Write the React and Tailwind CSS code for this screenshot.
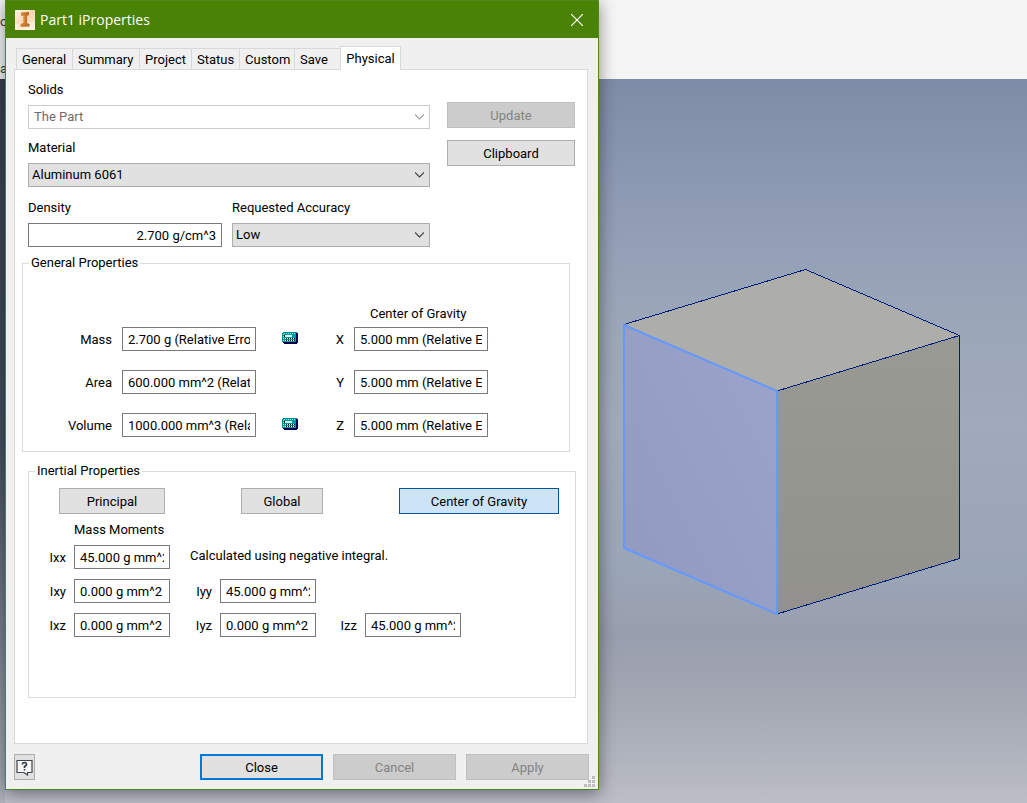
import React from 'react';

const Field = ({ label, value, id, align = 'text-left' }) => (
  <input
    id={id}
    aria-label={label}
    defaultValue={value}
    className={`h-6 w-full min-w-0 rounded-none border border-[#7a7a7a] bg-white px-[5px] text-black outline-none ${align}`}
  />
);

const Combo = ({ id, options, disabled }) => (
  <div className="relative">
    <select
      id={id}
      disabled={disabled}
      className={`h-6 w-full appearance-none rounded-none border pr-6 outline-none ${disabled ? 'border-[#cccccc] bg-white pl-[5px] text-[#6d6d6d] opacity-100' : 'border-[#adadad] bg-[#e1e1e1] pl-[3px] text-black'}`}
    >
      {options.map((o) => <option key={o}>{o}</option>)}
    </select>
    <svg viewBox="0 0 9 6" className={`pointer-events-none absolute top-[9px] right-[6px] h-[6px] w-[9px] ${disabled ? 'text-[#a0a0a0]' : 'text-[#404040]'}`}>
      <path d="M0 .5L4.500 5L9 .5" fill="none" stroke="currentColor" strokeWidth="1.1" />
    </svg>
  </div>
);

const VARIANTS = {
  normal: 'border border-[#adadad] bg-[#e1e1e1] text-black',
  disabled: 'border border-[#bfbfbf] bg-[#cccccc] text-[#838383]',
  active: 'border border-[#005499] bg-[#cce4f7] text-black',
  focus: 'border-2 border-[#0078d7] bg-[#e1e1e1] text-black',
};

const Button = ({ children, variant = 'normal', className = '' }) => (
  <button type="button" disabled={variant === 'disabled'} className={`h-[26px] pt-[2px] ${VARIANTS[variant]} ${className}`}>
    {children}
  </button>
);

const InventorIcon = () => (
  <svg viewBox="0 0 20 20" className="h-5 w-5" aria-hidden="true">
    <defs>
      <linearGradient id="paper" x1="0" y1="0" x2="1" y2="1">
        <stop offset="0" stopColor="#fff4e8" />
        <stop offset=".5" stopColor="#f7d5b5" />
        <stop offset="1" stopColor="#fdebdc" />
      </linearGradient>
      <linearGradient id="beam" x1="0" y1="0" x2="1" y2="0">
        <stop offset="0" stopColor="#d98a3a" />
        <stop offset="1" stopColor="#b5651d" />
      </linearGradient>
    </defs>
    <path d="M0 0H20V20H0Z" fill="url(#paper)" />
    <path d="M0 14L20 12V20H0Z" fill="#fff3e6" opacity=".7" />
    <path d="M6 2.500L14 2V5L12 6V13L14.500 14V16.500L5.500 17V14L8 13V6L6 5.500Z" fill="url(#beam)" />
    <path d="M8 6L9.500 5.500V13.500L8 13Z" fill="#e8a456" />
  </svg>
);

const CalcIcon = () => (
  <svg viewBox="0 0 16 12" className="h-3 w-4" shapeRendering="crispEdges" aria-hidden="true">
    <path d="M1 0H15V1H16V11H15V12H2V11H1V10H0V1H1Z" fill="#000050" />
    <path d="M1 1H14V10H1Z" fill="#009a9a" />
    <path d="M1 0H15V1H1ZM0 1H1V10H0Z" fill="#008a8a" />
    <path d="M2 1h1v1h-1zM4 1h1v1h-1zM6 1h1v1h-1zM8 1h1v1h-1zM10 1h1v1h-1zM12 1h1v1h-1zM1 2h1v1h-1zM1 4h1v1h-1zM1 6h1v1h-1zM1 8h1v1h-1z" fill="#6ff" />
    <path d="M2 3H10V5H2Z" fill="#000" />
    <path d="M3 3H10V5H3Z" fill="#e8e8e8" />
    <path d="M3 6H13V7H3ZM3 8H13V9H3Z" fill="#000" />
    <path d="M3 6h1v1h-1zM5 6h1v1h-1zM7 6h1v1h-1zM9 6h1v1h-1zM11 6h1v1h-1zM3 8h1v1h-1zM5 8h1v1h-1zM7 8h1v1h-1zM9 8h1v1h-1zM11 8h1v1h-1z" fill="#fff" />
  </svg>
);

const HelpIcon = () => (
  <svg viewBox="0 0 17 17" className="h-[17px] w-[17px]" aria-hidden="true">
    <path d="M1 1.500H16V13.500H11.500V16L8 13.500H1Z" fill="#f7f7f7" stroke="#3c4650" strokeWidth="1.200" />
    <path d="M6.500 5.500V4.500Q6.500 3.500 8.500 3.500T10.500 5.500Q10.500 6.500 8.500 7.500V9M8.500 10V11.500" fill="none" stroke="#2c3640" strokeWidth="1.600" />
  </svg>
);

const Cube = () => (
  <svg viewBox="622 267 340 349" className="h-[349px] w-[340px] shrink-0" role="img" aria-label="Part1 model">
    <defs>
      <linearGradient id="left" x1="1" y1="0" x2="0" y2="1">
        <stop offset="0" stopColor="#9ba4ca" />
        <stop offset="1" stopColor="#9199c1" />
      </linearGradient>
      <linearGradient id="right" x1="0" y1="0" x2="0" y2="1">
        <stop offset="0" stopColor="#999a93" />
        <stop offset="1" stopColor="#92918d" />
      </linearGradient>
    </defs>
    <path d="M624 325L806 269L960 336L777 391Z" fill="#adada9" />
    <path d="M777 391L960 336V558L777 614Z" fill="url(#right)" />
    <path d="M624 325L777 391V614L624 548Z" fill="url(#left)" />
    <path d="M624 324.500L805.500 269.500L959.500 335.500V558.500L777 614M777 391L959.500 335.500" fill="none" stroke="#001c80" shapeRendering="crispEdges" />
    <path d="M624 325L777 391V614L624 548Z" fill="none" stroke="#6699ff" strokeWidth="2" />
  </svg>
);

const Grip = () => (
  <svg viewBox="0 0 11 11" className="absolute right-[3px] bottom-[2px] h-[11px] w-[11px]" aria-hidden="true">
    <path d="M8 0h3v3h-3zM4 4h3v3h-3zM8 4h3v3h-3zM0 8h3v3h-3zM4 8h3v3h-3zM8 8h3v3h-3z" fill="#bfbfbf" />
  </svg>
);

const TABS = ['General', 'Summary', 'Project', 'Status', 'Custom', 'Save'];

const PROPERTIES = [
  { name: 'Mass', value: '2.700 g (Relative Error = 0.000000%)', calc: true, axis: 'X' },
  { name: 'Area', value: '600.000 mm^2 (Relative Error = 0.000000%)', calc: false, axis: 'Y' },
  { name: 'Volume', value: '1000.000 mm^3 (Relative Error = 0.000000%)', calc: true, axis: 'Z' },
];

const Moment = ({ name, value }) => (
  <>
    <label htmlFor={name} className="pt-[5px] text-right">{name}</label>
    <Field id={name} value={value} />
  </>
);

const GeneralProperties = () => (
  <fieldset className="mt-2 mr-[17px] ml-[7px] border border-[#dcdcdc] pb-[14px]">
    <legend className="ml-[6px] px-[2px]">General Properties</legend>
    <div className="grid grid-cols-[89px_134px_78px_134px] gap-x-[10px] pt-[35px] pb-[5px]">
      <span className="col-start-4 pl-4">Center of Gravity</span>
    </div>
    <div className="grid grid-cols-[89px_134px_78px_134px] gap-x-[10px] gap-y-[19px]">
      {PROPERTIES.map((p) => (
        <React.Fragment key={p.name}>
          <label htmlFor={p.name} className="pt-[5px] text-right">{p.name}</label>
          <Field id={p.name} value={p.value} />
          <div className="flex items-start justify-between pt-[5px] pl-4">
            {p.calc ? <button type="button" aria-label={`Calculate ${p.name}`}><CalcIcon /></button> : <span />}
            <label htmlFor={p.axis}>{p.axis}</label>
          </div>
          <Field id={p.axis} value="5.000 mm (Relative Error = 0.000000%)" />
        </React.Fragment>
      ))}
    </div>
  </fieldset>
);

const InertialProperties = () => (
  <fieldset className="mt-[11px] mr-[11px] ml-[13px] border border-[#dcdcdc] pb-[60px]">
    <legend className="ml-[6px] px-[2px]">Inertial Properties</legend>
    <div className="flex justify-between pt-[9px] pr-4 pb-2 pl-[30px]">
      <Button className="w-[106px]">Principal</Button>
      <Button className="w-[82px]">Global</Button>
      <Button className="w-[160px]" variant="active">Center of Gravity</Button>
    </div>
    <p className="pb-[7px] pl-[45px]">Mass Moments</p>
    <div className="grid grid-cols-[37px_96px_34px_96px_33px_96px] gap-x-2 gap-y-[10px]">
      <Moment name="Ixx" value="45.000 g mm^2" />
      <p className="col-span-4 pt-[3px] pl-3">Calculated using negative integral.</p>
      <Moment name="Ixy" value="0.000 g mm^2" />
      <Moment name="Iyy" value="45.000 g mm^2" />
      <span className="col-span-2" />
      <Moment name="Ixz" value="0.000 g mm^2" />
      <Moment name="Iyz" value="0.000 g mm^2" />
      <Moment name="Izz" value="45.000 g mm^2" />
    </div>
  </fieldset>
);

const PropertiesDialog = () => (
  <section
    role="dialog"
    aria-label="Part1 iProperties"
    className="relative ml-[5px] w-[594px] max-w-full border border-[#4b8a1a] bg-[#f0f0f0] shadow-[0_3px_16px_rgba(0,0,0,0.45)]"
  >
    {/* Title bar */}
    <header className="flex h-[37px] items-center justify-between bg-[#4a8206] pr-[15px] pl-[9px]">
      <div className="flex items-center gap-[5px]">
        <InventorIcon />
        <h1 className="font-['Open_Sans','Noto_Sans',sans-serif] text-[14px] text-white">Part1 iProperties</h1>
      </div>
      <button type="button" aria-label="Close window" className="text-white">
        <svg viewBox="0 0 12 12" className="h-3 w-3"><path d="M0 0L12 12M12 0L0 12" stroke="currentColor" strokeWidth="1.200" /></svg>
      </button>
    </header>

    {/* Tabs */}
    <nav className="grid grid-cols-[56px_67px_52px_48px_55px_46px_61px] items-end pt-2 pl-[10px]">
      {TABS.map((t) => (
        <button key={t} type="button" className="h-[21px] border-t border-l border-[#d9d9d9] pt-px pl-[5px] text-left">{t}</button>
      ))}
      <button type="button" className="relative -mb-px h-6 border border-b-0 border-[#d9d9d9] bg-white">Physical</button>
    </nav>

    <main className="mr-[10px] ml-2 border border-[#d9d9d9] bg-white pb-[45px]">
      <div className="flex gap-[17px] pt-3 pr-3 pl-[13px]">
        <div className="min-w-0 flex-1">
          <label htmlFor="solids" className="mb-[7px] block">Solids</label>
          <Combo id="solids" options={['The Part']} disabled />
          <label htmlFor="material" className="mt-[11px] mb-[7px] block">Material</label>
          <Combo id="material" options={['Aluminum 6061', 'Generic']} />
          <div className="mt-[13px] flex gap-[10px]">
            <div className="w-[194px]">
              <label htmlFor="density" className="mb-[7px] block">Density</label>
              <Field id="density" value="2.700 g/cm^3" align="text-right" />
            </div>
            <div className="flex-1">
              <label htmlFor="accuracy" className="mb-[7px] block">Requested Accuracy</label>
              <Combo id="accuracy" options={['Low', 'Medium', 'High', 'Very High']} />
            </div>
          </div>
        </div>
        <div className="flex w-32 flex-col gap-3 pt-5">
          <Button variant="disabled">Update</Button>
          <Button>Clipboard</Button>
        </div>
      </div>
      <GeneralProperties />
      <InertialProperties />
    </main>

    <footer className="flex items-center gap-[10px] pt-[10px] pr-[9px] pb-[9px] pl-2">
      <button type="button" aria-label="Help" className="mr-auto flex h-[26px] w-[21px] items-center justify-center border border-[#adadad] bg-[#e1e1e1]"><HelpIcon /></button>
      <Button className="w-[123px]" variant="focus">Close</Button>
      <Button className="w-[123px]" variant="disabled">Cancel</Button>
      <Button className="w-[123px]" variant="disabled">Apply</Button>
    </footer>
    <Grip />
  </section>
);

const App = () => (
  <div className="relative min-h-screen overflow-hidden font-['Roboto','Noto_Sans',sans-serif] text-[13px] leading-4 text-black">
    {/* Modeling window behind the dialog */}
    <div className="absolute inset-0 flex flex-col">
      <div className="flex h-[79px] flex-col justify-between bg-[#f5f5f5] pt-[14px] pb-[2px] text-[#404040]">
        <span>c</span>
        <span>a</span>
      </div>
      <div className="flex flex-1">
        <div className="w-[5px] bg-linear-to-b from-[#3a404e] via-[#474f5f] to-[#b0b3bb]" />
        <div className="flex flex-1 items-start justify-end bg-[linear-gradient(#7f8ca7,#8f9cb4_18%,#9aa6b8_32%,#a1a9bc_48%,#9aa5b6_68%,#999eae_77%,#a4a8b3_86%,#bbbec6)] pt-[188px] pr-[65px]">
          <Cube />
        </div>
      </div>
    </div>
    <PropertiesDialog />
  </div>
);

export default App;
